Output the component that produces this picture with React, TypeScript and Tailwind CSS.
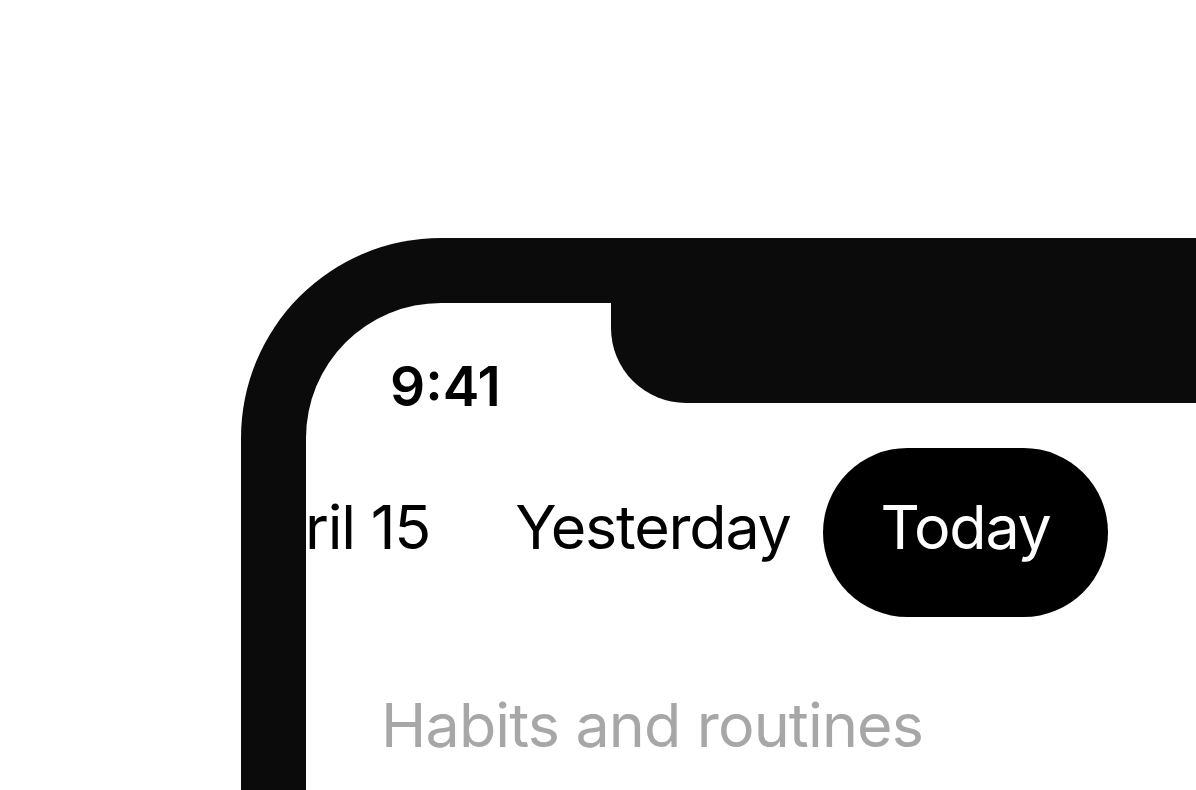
import React from 'react';

const font = { fontFamily: 'Inter, "Noto Sans", sans-serif' };

const DayTabs: React.FC = () => {
  return (
    <div className="mt-[34px] flex items-center -ml-[78px] text-[61px] leading-none text-black tracking-[-0.02em] whitespace-nowrap">
      <span className="pb-[10px]">April 15</span>
      <span className="ml-[85px] pb-[10px]">Yesterday</span>
      <span className="ml-[32px] flex h-[169px] items-center rounded-full bg-black pl-[58px] pr-[57px] pb-[10px] text-white">
        Today
      </span>
    </div>
  );
};

export default function App() {
  return (
    <div
      className="h-[790px] w-[1196px] overflow-hidden bg-white pl-[241px] pt-[238px]"
      style={font}
    >
      {/* phone frame */}
      <div className="h-[700px] w-[1000px] rounded-tl-[200px] bg-[#0b0b0b] pl-[65px] pt-[65px]">
        {/* screen */}
        <div className="flex h-full w-full flex-col overflow-hidden rounded-tl-[135px] bg-white">
          {/* status bar */}
          <div className="flex items-start">
            <div className="w-[305px] shrink-0 pl-[84px] pt-[56px] text-[55px] font-semibold leading-none text-black">
              9:41
            </div>
            <div className="h-[100px] flex-1 rounded-bl-[75px] bg-[#0b0b0b]" />
          </div>

          <DayTabs />

          <div className="mt-[78px] pl-[75px] text-[61px] leading-none text-[#a7a7a7] tracking-[-0.014em] whitespace-nowrap">
            Habits and routines
          </div>
        </div>
      </div>
    </div>
  );
}
